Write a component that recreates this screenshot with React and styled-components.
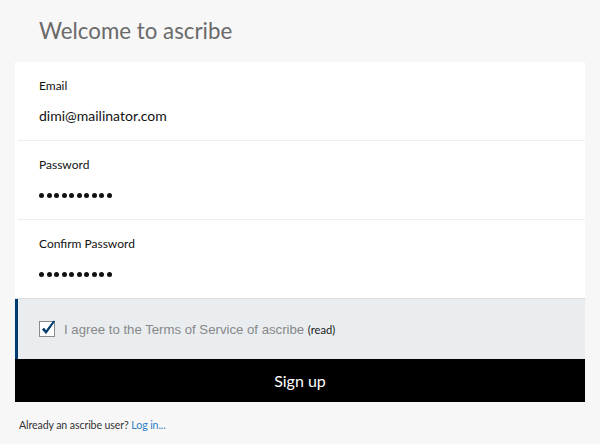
import React from "react";
import styled, { createGlobalStyle } from "styled-components";

const Global = createGlobalStyle`
  html, body { margin: 0; padding: 0; background: #f7f7f7; }
  body { font-family: "Lato", "Noto Sans", sans-serif; }
`;

const Page = styled.div`
  width: 600px;
  height: 444px;
  box-sizing: border-box;
  padding: 0 15px;
  background: #f7f7f7;
  display: flex;
  flex-direction: column;
`;

const Title = styled.h1`
  margin: 0;
  height: 62px;
  box-sizing: border-box;
  padding: 17px 0 0 24px;
  font-family: "Lato", sans-serif;
  font-weight: 400;
  font-size: 22.3px;
  line-height: 28px;
  color: #6a6a6a;
`;

const Panel = styled.form`
  background: #fff;
  display: flex;
  flex-direction: column;
`;

const Field = styled.div`
  height: 79px;
  box-sizing: border-box;
  padding: 16px 24px 0 24px;
  margin-left: 3px;
  border-bottom: 1px solid ${(p) => (p.last ? "#ddd" : "#eee")};
  ${(p) => (p.last ? "margin-left: 0; padding-left: 24px;" : "padding-left: 21px;")}
  display: flex;
  flex-direction: column;
`;

const Label = styled.label`
  font-family: "Lato", sans-serif;
  font-size: 12px;
  line-height: 16px;
  color: #111;
`;

const Value = styled.div`
  margin-top: 13px;
  font-family: "Lato", sans-serif;
  font-size: 14px;
  line-height: 18px;
  color: #111;
`;

const Dots = styled.div`
  margin-top: 20px;
  display: flex;
  gap: 2.5px;
`;

const Dot = styled.span`
  width: 5px;
  height: 5px;
  border-radius: 50%;
  background: #111;
`;

const Agree = styled.div`
  height: 60px;
  box-sizing: border-box;
  background: #e9edf0;
  border-left: 3px solid #003b6f;
  padding-left: 21px;
  display: flex;
  align-items: center;
  gap: 9px;
`;

const Box = styled.span`
  width: 14px;
  height: 14px;
  border: 1px solid #8a8a8a;
  background: #fff;
  position: relative;
  flex: none;
`;

const Check = styled.svg`
  position: absolute;
  left: 1px;
  top: -2px;
`;

const AgreeText = styled.span`
  font-family: "Liberation Sans", Arial, sans-serif;
  font-size: 13.2px;
  color: #888;
`;

const Read = styled.span`
  font-family: "Lato", sans-serif;
  font-size: 11.2px;
  color: #222;
`;

const Button = styled.button`
  height: 43px;
  border: 0;
  background: #000;
  color: #fff;
  font-family: "Lato", sans-serif;
  font-size: 16px;
  cursor: pointer;
`;

const Footer = styled.p`
  margin: 0;
  padding: 17px 0 0 4px;
  font-family: "Lato", sans-serif;
  font-size: 10.6px;
  color: #333;
  letter-spacing: -0.1px;
`;

const Link = styled.a`
  color: #2f7ec5;
  text-decoration: none;
`;

const PasswordDots = () => (
  <Dots>
    {Array.from({ length: 10 }).map((_, i) => (
      <Dot key={i} />
    ))}
  </Dots>
);

export default function App() {
  return (
    <>
      <Global />
      <Page>
        <Title>Welcome to ascribe</Title>
        <Panel>
          <Field>
            <Label>Email</Label>
            <Value>dimi@mailinator.com</Value>
          </Field>
          <Field>
            <Label>Password</Label>
            <PasswordDots />
          </Field>
          <Field last>
            <Label>Confirm Password</Label>
            <PasswordDots />
          </Field>
          <Agree>
            <Box>
              <Check width="15" height="17" viewBox="0 0 15 17">
                <path
                  d="M1.5 9.5 L5 13.5 L13.5 1.5 L12.5 1 L5 11 L3 8.2 Z"
                  fill="#003b6f"
                  stroke="#003b6f"
                  strokeWidth="1"
                  strokeLinejoin="round"
                />
              </Check>
            </Box>
            <AgreeText>
              I agree to the Terms of Service of ascribe <Read>(read)</Read>
            </AgreeText>
          </Agree>
          <Button type="button">Sign up</Button>
        </Panel>
        <Footer>
          Already an ascribe user? <Link href="#">Log in...</Link>
        </Footer>
      </Page>
    </>
  );
}
